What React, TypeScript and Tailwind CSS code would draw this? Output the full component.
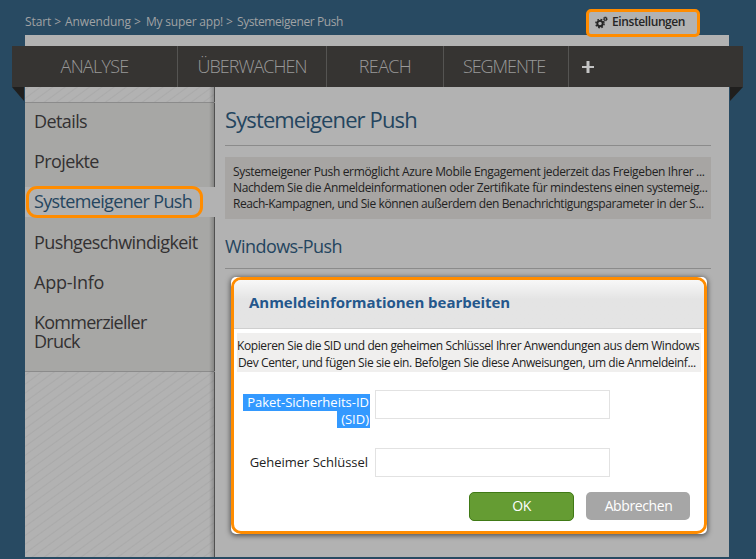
const sans = "font-['Open_Sans','Noto_Sans',sans-serif]";

const stripes =
  "bg-[#b2b2b2] bg-[repeating-linear-gradient(-36deg,#b2b2b2_0px,#b2b2b2_5px,#aaaaaa_6px,#b2b2b2_7.2px)]";

function GearsIcon() {
  return (
    <svg width="13" height="13" viewBox="0 0 13 13" fill="none" stroke="#252525">
      <circle cx="5" cy="7.6" r="2.7" strokeWidth="1.9" />
      <circle cx="5" cy="7.6" r="4.1" strokeWidth="1.5" strokeDasharray="1.7 1.52" />
      <circle cx="10.3" cy="2.9" r="1.3" strokeWidth="1.1" />
      <circle cx="10.3" cy="2.9" r="2.1" strokeWidth="0.7" strokeDasharray="0.9 0.75" />
    </svg>
  );
}

function TopNav() {
  const cell = "flex items-center justify-center border-r border-[#555452] pb-px";
  return (
    <nav className="relative -ml-[13px] -mr-[14px] flex h-[41px] shrink-0 bg-[#363432] text-[18px] font-light text-[#999999]">
      <div className={`${cell} w-[166px] tracking-[-0.75px]`}>ANALYSE</div>
      <div className={`${cell} w-[149px] tracking-[-1px]`}>ÜBERWACHEN</div>
      <div className={`${cell} w-[117px] tracking-[-0.65px]`}>REACH</div>
      <div className={`${cell} w-[125px] pr-[4px] tracking-[-1.05px]`}>SEGMENTE</div>
      <div className="flex w-[37px] items-center justify-center">
        <svg width="12" height="12" viewBox="0 0 12 12" fill="#c4c4c4">
          <path d="M4.5 0h3v5H12v2H7.5v5h-3V7H0V5h4.5z" />
        </svg>
      </div>
      <svg className="absolute left-0 top-full" width="12" height="14" viewBox="0 0 12 14">
        <path d="M0 0h12v14z" fill="#201f1e" />
      </svg>
      <svg className="absolute right-0 top-full" width="13" height="14" viewBox="0 0 13 14">
        <path d="M0 0h13L0 14z" fill="#201f1e" />
      </svg>
    </nav>
  );
}

function Sidebar() {
  return (
    <aside className="relative flex w-[190px] shrink-0 flex-col text-[18px] leading-[18px] text-[#333132]">
      <div className={`h-[15px] shrink-0 border-r border-[#505050] ${stripes}`} />
      <div className="flex h-[270px] shrink-0 flex-col border-y border-[#8b8b8b] bg-[#a7a7a5]">
        <div className="flex h-[84px] flex-col border-r border-[#505050] pl-[9px]">
          <span className="mt-[9px] tracking-[-0.6px]">Details</span>
          <span className="mt-[22px] tracking-[-0.6px]">Projekte</span>
        </div>
        <div className="relative flex h-[30px] items-center bg-[#b2b2b2] pb-[2px] pl-[9px] text-[#24455f]">
          <span className="whitespace-nowrap tracking-[-0.65px]">Systemeigener Push</span>
          <span className="absolute -top-px left-px h-[32px] w-[177px] rounded-[11px] border-[3px] border-[#ff8c00]" />
        </div>
        <div className="flex flex-1 flex-col border-r border-[#505050] pl-[9px]">
          <span className="mt-[16px] whitespace-nowrap tracking-[-0.6px]">Pushgeschwindigkeit</span>
          <span className="mt-[22px] tracking-[-0.25px]">App-Info</span>
          <span className="mt-[22px] w-[120px] leading-[19px] tracking-[-0.75px]">Kommerzieller Druck</span>
        </div>
      </div>
      <div className={`flex-1 border-r border-[#505050] ${stripes}`} />
      <div className="absolute right-px top-0 h-[100px] w-[5px] bg-linear-to-r from-black/0 to-black/20" />
      <div className="absolute bottom-0 right-px top-[130px] w-[5px] bg-linear-to-r from-black/0 to-black/20" />
    </aside>
  );
}

function Dialog() {
  const input = "h-[29px] w-[235px] border border-[#e2e2e2] bg-white outline-none";
  return (
    <div className="absolute left-[16px] top-[190px] h-[257px] w-[476px] rounded-[5px] bg-white shadow-[0_1px_5px_1px_rgba(0,0,0,0.5)]">
      <div className="flex h-full flex-col overflow-hidden rounded-[10px] border-[3px] border-[#ff8c00] bg-white">
        <div className="flex h-[49px] shrink-0 items-center border-b border-[#cfcfcf] bg-linear-to-b from-[#f8f8f8] to-[#e4e4e4] to-40% pb-[3px] pl-[15px]">
          <h3 className="whitespace-nowrap text-[15px] font-bold tracking-[-0.03px] text-[#24578c]">
            Anmeldeinformationen bearbeiten
          </h3>
        </div>
        <div className="ml-[3px] mt-[4px] h-[39px] w-[464px] shrink-0 whitespace-nowrap bg-[#f0efee] pt-[4px] text-[12px] leading-[17px] text-[#222]">
          <p className="tracking-[-0.4px]">Kopieren Sie die SID und den geheimen Schlüssel Ihrer Anwendungen aus dem Windows</p>
          <p className="pl-px tracking-[-0.39px]">Dev Center, und fügen Sie sie ein. Befolgen Sie diese Anweisungen, um die Anmeldeinf...</p>
        </div>
        <div className="mt-[18px] flex h-[39px] gap-[5px] pl-[9px] text-[13px]">
          <label className="flex w-[127px] flex-col items-end pt-[4px] leading-[16px] text-white">
            <span className="whitespace-nowrap bg-[#3399ff] pb-px pl-[4px] pr-px">Paket-Sicherheits-ID</span>
            <span className="bg-[#3399ff] pb-px pl-[4px] pr-px">(SID)</span>
          </label>
          <input className={input} />
        </div>
        <div className="mt-[19px] flex h-[29px] gap-[5px] pl-[9px] text-[13px]">
          <label className="flex w-[127px] items-center justify-end whitespace-nowrap pr-[2px] tracking-[-0.03px] text-[#222]">Geheimer Schlüssel</label>
          <input className={input} />
        </div>
        <div className="mt-[15px] flex gap-[12px] pl-[235px] text-[14px] text-white">
          <button className="h-[29px] w-[105px] rounded-[5px] border border-[#407a16] bg-[#659c33] pb-[2px] tracking-[-0.6px]">OK</button>
          <button className="h-[28px] w-[104px] rounded-[5px] bg-[#a6a6a6] pb-px pl-px tracking-[-0.4px]">Abbrechen</button>
        </div>
      </div>
    </div>
  );
}

export default function App() {
  return (
    <div className={`flex h-[559px] w-[756px] flex-col overflow-hidden bg-[#284a62] px-[25px] ${sans}`}>
      <header className="relative flex h-[35px] shrink-0 text-[12px] leading-[16px] text-[#a0a2a4]">
        <div className="mt-[14px] flex whitespace-nowrap">
          <span className="w-[40px] tracking-[-0.1px]">Start &gt;</span>
          <span className="w-[81px] tracking-[-0.1px]">Anwendung &gt;</span>
          <span className="w-[91px] tracking-[-0.2px]">My super app! &gt;</span>
          <span className="tracking-[-0.4px]">Systemeigener Push</span>
        </div>
        <div className="absolute left-[561px] top-[9px] z-10 flex h-[28px] w-[114px] items-center rounded-[5px] border-[3px] border-[#ff8c00] bg-[#b2b2b2] pb-[2px] pl-[6px] text-[#252525]">
          <GearsIcon />
          <span className="ml-[4px] text-[12px] font-semibold tracking-[-0.4px]">Einstellungen</span>
        </div>
      </header>
      <div className="flex h-[522px] w-[704px] flex-col bg-[#b2b2b2] pt-[11px]">
        <TopNav />
        <div className="flex flex-1">
          <Sidebar />
          <main className="relative flex-1 pl-[10px] pr-[18px] text-[#24455f]">
            <h1 className="mt-[17px] h-[42px] border-b border-[#8b8b8b] text-[22px] leading-[31px] tracking-[-0.88px]">
              Systemeigener Push
            </h1>
            <div className="mt-[11px] h-[62px] whitespace-nowrap bg-[#a7a5a3] pl-[8px] pt-[7px] text-[12px] leading-[16px] text-[#222]">
              <p className="tracking-[-0.35px]">Systemeigener Push ermöglicht Azure Mobile Engagement jederzeit das Freigeben Ihrer ...</p>
              <p className="tracking-[-0.375px]">Nachdem Sie die Anmeldeinformationen oder Zertifikate für mindestens einen systemeig...</p>
              <p className="tracking-[-0.41px]">Reach-Kampagnen, und Sie können außerdem den Benachrichtigungsparameter in der S...</p>
            </div>
            <h2 className="mt-[15px] h-[35px] border-b border-[#8b8b8b] text-[18px] leading-[24px] tracking-[-0.57px]">
              Windows-Push
            </h2>
            <Dialog />
          </main>
        </div>
      </div>
    </div>
  );
}
